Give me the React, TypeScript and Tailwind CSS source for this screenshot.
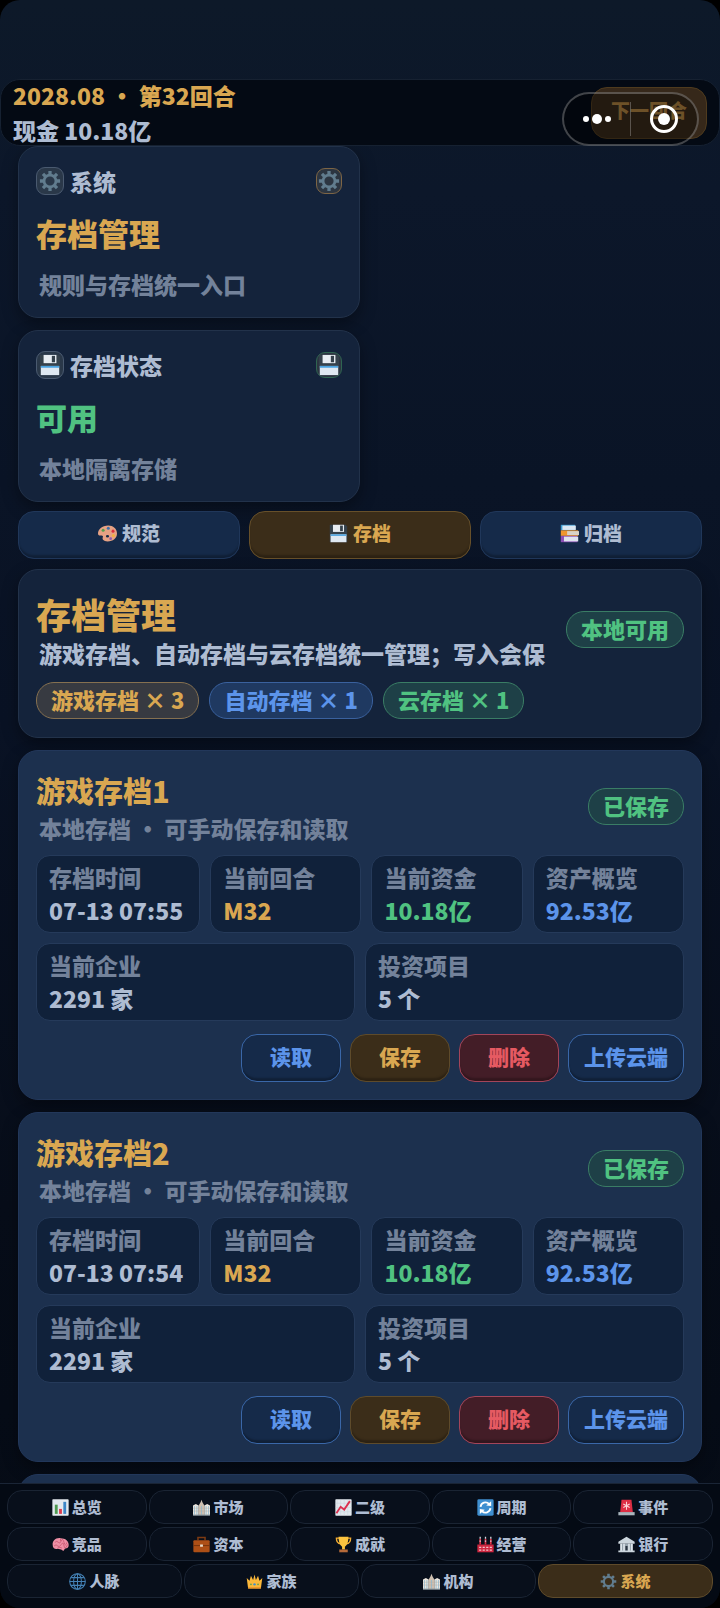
import type { ReactNode } from 'react';

type Tone = 'gold' | 'blue' | 'green' | 'plain';

const textTone: Record<Tone, string> = {
  gold: 'text-[#d9a751]',
  blue: 'text-[#5c94ea]',
  green: 'text-[#50c281]',
  plain: 'text-[#aebcd2]',
};

const chipTone: Record<Tone, string> = {
  gold: 'border-[#857050] bg-[#373a41] text-[#d9a751]',
  blue: 'border-[#3a619e] bg-[#1f3961] text-[#5c94ea]',
  green: 'border-[#3a7d65] bg-[#1e4047] text-[#50c281]',
  plain: 'border-[#3a4a63] bg-[#1d2c45] text-[#aebcd2]',
};

const drawings: Record<string, ReactNode> = {
  gear: (
    <g fill="none" stroke="#617c8e">
      <circle cx="12" cy="12" r="6.500" strokeWidth="3" />
      <path
        d="M12 5V1M12 23v-4M5 12H1M23 12h-4M7 7 4.300 4.300M19.700 19.700 17 17M7 17l-2.700 2.700M19.700 4.300 17 7"
        strokeWidth="3.600"
      />
    </g>
  ),
  floppy: (
    <>
      <path d="M1 1h20l2 2v20H1z" fill="#35414b" />
      <path d="M5 1h14v9H5z" fill="#e8edf2" />
      <path d="M14 2h3.500v7H14z" fill="#35414b" />
      <path d="M2 13h20v10H2z" fill="#dfe8f1" />
      <path d="M2 13h20v2H2z" fill="#4aa3e0" />
    </>
  ),
  palette: (
    <>
      <path
        d="M13 2C5 2 0 7 0 12c0 2 1.500 3 3.500 2.500S7 15 6 17s1 5 6 5c7 0 12-4 12-10S19 2 13 2zm-1 15a2 1.500 0 1 1 0-3 2 1.500 0 0 1 0 3z"
        fill="#e6a284"
      />
      <circle cx="6.500" cy="8" r="1.900" fill="#55a04c" />
      <circle cx="13" cy="5.500" r="1.900" fill="#3c6fa8" />
      <circle cx="19" cy="9" r="1.900" fill="#d92f3c" />
      <circle cx="19.500" cy="14.500" r="1.900" fill="#f2b13c" />
      <circle cx="16" cy="18.500" r="1.700" fill="#8a5bb0" />
    </>
  ),
  books: (
    <>
      <path d="M1 1h18v7H1z" fill="#3a9bd1" />
      <path d="M3 2h17v5.500H3z" fill="#dbe7f2" />
      <path d="M1 8h22v7H1z" fill="#f0962e" />
      <path d="M9 9h15v5H9z" fill="#d9d3c8" />
      <path d="M1 15h21v8H1z" fill="#8b4fb5" />
      <path d="M5 16h18v6H5z" fill="#dfe3ef" />
    </>
  ),
  city: (
    <>
      <path d="M8 9l2.500-4L12 1l1.500 4L16 9v14H8z" fill="#cdbfb0" />
      <path d="M0 9l4-2 4 2v14H0zM16 9l4-2 4 2v14h-8z" fill="#ebe6de" />
      <path d="M2 10v12M5.500 10v12M18.500 10v12M22 10v12M12 10v12" stroke="#8dbad2" strokeWidth="1.200" />
      <path d="M0 13h8M0 17h8M16 13h8M16 17h8M8 13h8M8 17h8" stroke="#b5aaa0" strokeWidth=".6" />
      <path d="M0 22h24v1.500H0z" fill="#83929c" />
    </>
  ),
  chart: (
    <>
      <rect x="0.500" y="0.500" width="23" height="23" rx="1" fill="#e3e9ee" />
      <path d="M4 8h4v13H4z" fill="#4f9a52" />
      <path d="M10 14h4v7h-4z" fill="#dc3b4e" />
      <path d="M16 4h4v17h-4z" fill="#3d86c6" />
    </>
  ),
  rise: (
    <>
      <rect x="0.500" y="0.500" width="23" height="23" rx="1" fill="#e3e9ee" />
      <path d="M3 1v22M8 1v22M13 1v22M18 1v22M1 6h22M1 12h22M1 18h22" stroke="#c6d3dd" strokeWidth=".7" />
      <path d="m2 20 6-9 5 4 8-12" fill="none" stroke="#dc3050" strokeWidth="2.600" />
    </>
  ),
  cycle: (
    <>
      <rect x="0.500" y="0.500" width="23" height="23" rx="2" fill="#3f8fd0" />
      <path d="M5 11a7 7 0 0 1 12-4M19 13a7 7 0 0 1-12 4" fill="none" stroke="#fff" strokeWidth="2.600" />
      <path d="m13 9 7 1V3zM11 15l-7-1v7z" fill="#fff" />
    </>
  ),
  siren: (
    <>
      <path d="M3 19 5 1h14l2 18z" fill="#dd2e44" />
      <path d="M12 4v11M7.500 7l9 5M16.500 7l-9 5" stroke="#fbd5da" strokeWidth="1.500" />
      <path d="M.5 18.500h23V23H.5z" fill="#a9b4bc" />
    </>
  ),
  brain: (
    <>
      <path
        d="M1 13C0 7 5 2 12 3c7 0 12 4 11.500 10 0 3-2 4.500-5 4.500L16 21l-3-2-5-1c-4 1-7-1-7-5z"
        fill="#ee8fa5"
      />
      <path
        d="M4 9q3-3 5 0t4-2 4 2 4 0M3 14q3-3 5 0t5-2 4 2 5-2M12 4v3M8 17q3-2 6 0"
        fill="none"
        stroke="#c95873"
        strokeWidth="1.200"
      />
    </>
  ),
  briefcase: (
    <>
      <path d="M7 6V2h10v4" fill="none" stroke="#7c3a12" strokeWidth="2.200" />
      <rect x="0.500" y="6" width="23" height="17" rx="1.500" fill="#ad4f16" />
      <path d="M.5 13.500h23" stroke="#6e300c" strokeWidth="1.200" />
      <path d="M10 12h4v3h-4z" fill="#e8dccb" />
    </>
  ),
  trophy: (
    <>
      <path d="M6 3H2q0 7 6 8M18 3h4q0 7-6 8" fill="none" stroke="#f2ac33" strokeWidth="2" />
      <path d="M5 1h14q0 11-5 14v4h-4v-4Q5 12 5 1z" fill="#fcc43f" />
      <path d="M6 19h12v4H6z" fill="#b56a3a" />
    </>
  ),
  factory: (
    <>
      <path d="M4.500 12V4M12 12V4M19.500 12V4" stroke="#dd2e44" strokeWidth="2.400" />
      <path d="M4.500 4V1M12 4V1M19.500 4V1M4.500 8V6.500M12 8V6.500M19.500 8V6.500" stroke="#d5dce2" strokeWidth="1.800" />
      <path d="M.5 12h23v11H.5z" fill="#cf2740" />
      <path d="M3 16h3M8 16h3M13 16h3M18 16h3M3 20h3M8 20h3M13 20h3M18 20h3" stroke="#f3c2ca" strokeWidth="1.600" />
    </>
  ),
  bank: (
    <>
      <path d="M12 1 .5 8v3h23V8z" fill="#ccd6dd" />
      <path d="M3 11h18v10H3z" fill="#96a4ae" />
      <path d="M4.500 11v10M8.500 11v10M15.500 11v10M19.500 11v10" stroke="#e1e8ed" strokeWidth="2.200" />
      <path d="M10.500 14h3v7h-3z" fill="#2a3440" />
      <path d="M.5 20.500h23V23H.5z" fill="#ccd6dd" />
    </>
  ),
  globe: (
    <g fill="none" stroke="#4380b4" strokeWidth="1.500">
      <circle cx="12" cy="12" r="11" />
      <ellipse cx="12" cy="12" rx="5.500" ry="11" />
      <path d="M12 1v22M1 12h22M3 6.500h18M3 17.500h18" />
    </g>
  ),
  crown: (
    <>
      <path d="M3 22 1 7l4 4 2-7 3 6 2-8 2 8 3-6 2 7 4-4-2 15z" fill="#fbb83a" />
      <circle cx="7" cy="16" r="1.200" fill="#55a04c" />
      <circle cx="12" cy="16" r="1.700" fill="#3f8fd0" />
      <circle cx="17" cy="16" r="1.200" fill="#55a04c" />
      <path d="M3 20h18v2H3z" fill="#e8912b" />
    </>
  ),
};

function Pic({ name, className }: { name: string; className: string }) {
  return (
    <svg viewBox="0 0 24 24" aria-hidden="true" className={`shrink-0 ${className}`}>
      {drawings[name]}
    </svg>
  );
}

function Chip({ tone, children }: { tone: Tone; children: ReactNode }) {
  return (
    <span
      className={`flex h-[37px] shrink-0 items-center rounded-[18px] border px-[14px] pb-[3px] text-[22px] leading-none font-black whitespace-pre ${chipTone[tone]}`}
    >
      {children}
    </span>
  );
}

function SummaryCard(props: { icon: string; label: string; value: string; note: string; tone: Tone; ring: string }) {
  return (
    <section className="w-1/2 rounded-[20px] border border-[#22324a] bg-[#14233b] px-[17px] pt-5 pb-4 shadow-[0_6px_16px_rgba(0,0,0,0.35)]">
      <div className="flex items-center gap-[6px]">
        <span className="flex size-7 items-center justify-center rounded-[9px] border border-[#4a5a70] bg-[#2a3849]">
          <Pic name={props.icon} className="size-[22px]" />
        </span>
        <h2 className={`text-[23px] leading-[28px] font-black ${textTone.plain}`}>{props.label}</h2>
        <span
          className={`ml-auto flex size-[26px] items-center justify-center rounded-[9px] border bg-[#2c3541] ${props.ring}`}
        >
          <Pic name={props.icon} className="size-[22px]" />
        </span>
      </div>
      <p className={`mt-4 text-[31px] leading-[44px] font-black ${textTone[props.tone]}`}>{props.value}</p>
      <p className="mt-3 pl-[3px] text-[23px] leading-[34px] font-black text-[#73829a]">{props.note}</p>
    </section>
  );
}

function Tab({ icon, label, active }: { icon: string; label: string; active?: boolean }) {
  return (
    <button
      type="button"
      className={`flex h-12 flex-1 items-center justify-center gap-[5px] rounded-[16px] border pb-[3px] text-[19px] font-black shadow-[inset_0_-4px_2px_-1px_rgba(0,0,0,0.25)] ${
        active ? 'border-[#67502a] bg-[#3b2d19] text-[#d9a751]' : 'border-[#20375a] bg-[#152a49] text-[#aebcd2]'
      }`}
    >
      <Pic name={icon} className="size-[19px]" />
      {label}
    </button>
  );
}

function Stat({ label, value, tone, className }: { label: string; value: string; tone: Tone; className: string }) {
  return (
    <div
      className={`flex min-h-[78px] flex-col justify-center rounded-[14px] border border-[#253a5a] bg-[#10213a] px-3 text-[23px] leading-[33px] font-black whitespace-nowrap ${className}`}
    >
      <dt className="text-[#73829a]">{label}</dt>
      <dd className={textTone[tone]}>{value}</dd>
    </div>
  );
}

const actionTone = {
  blue: 'border-[#3a67a8] bg-[#152a49] text-[#5c94ea]',
  gold: 'border-[#5e4b2b] bg-[#3b2d19] text-[#d9a751]',
  red: 'border-[#a3455a] bg-[#431d27] text-[#e65a62]',
};

function Action({ tone, children }: { tone: keyof typeof actionTone; children: ReactNode }) {
  return (
    <button
      type="button"
      className={`flex h-12 min-w-[100px] items-center justify-center rounded-[16px] border px-[15px] pb-[3px] text-[21px] font-black shadow-[inset_0_-4px_2px_-1px_rgba(0,0,0,0.25)] ${actionTone[tone]}`}
    >
      {children}
    </button>
  );
}

function SaveCard({ name, time }: { name: string; time: string }) {
  return (
    <article className="shrink-0 rounded-[20px] border border-[#22375a] bg-[#1c304e] p-[17px] shadow-[0_6px_16px_rgba(0,0,0,0.35)]">
      <header className="flex items-center justify-between">
        <div>
          <h2 className={`text-[29px] leading-[44px] font-black ${textTone.gold}`}>{name}</h2>
          <p className="pl-[3px] text-[23px] leading-[32px] font-black text-[#73829a]">本地存档 · 可手动保存和读取</p>
        </div>
        <Chip tone="green">已保存</Chip>
      </header>
      <dl className="mt-[11px] flex flex-wrap gap-[10px]">
        <Stat className="flex-[1_0_22%]" label="存档时间" value={time} tone="plain" />
        <Stat className="flex-[1_1_20%]" label="当前回合" value="M32" tone="gold" />
        <Stat className="flex-[1_1_20%]" label="当前资金" value="10.18亿" tone="green" />
        <Stat className="flex-[1_1_20%]" label="资产概览" value="92.53亿" tone="blue" />
        <Stat className="flex-[1_1_40%]" label="当前企业" value="2291 家" tone="plain" />
        <Stat className="flex-[1_1_40%]" label="投资项目" value="5 个" tone="plain" />
      </dl>
      <div className="mt-[13px] flex justify-end gap-[9px]">
        <Action tone="blue">读取</Action>
        <Action tone="gold">保存</Action>
        <Action tone="red">删除</Action>
        <Action tone="blue">上传云端</Action>
      </div>
    </article>
  );
}

const navRows: [string, string][][] = [
  [['chart', '总览'], ['city', '市场'], ['rise', '二级'], ['cycle', '周期'], ['siren', '事件']],
  [['brain', '竞品'], ['briefcase', '资本'], ['trophy', '成就'], ['factory', '经营'], ['bank', '银行']],
  [['globe', '人脉'], ['crown', '家族'], ['city', '机构'], ['gear', '系统']],
];

export default function App() {
  return (
    <div className="h-screen bg-black font-['Noto_Sans_CJK_SC',sans-serif]">
      <div className="flex h-full flex-col overflow-hidden rounded-[20px] bg-[linear-gradient(180deg,#0d1929_0%,#0c172a_12%,#0a1426_30%,#091224_45%,#070d19_75%,#050b15_100%)]">
        <header className="relative mt-[79px] flex h-[67px] shrink-0 items-center rounded-[20px] border border-[#162131] bg-[#040a14] px-3 font-black">
          <div className="text-[23px] leading-[35px]">
            <p className={`whitespace-pre ${textTone.gold}`}>2028.08 · 第32回合</p>
            <p className={textTone.plain}>现金 10.18亿</p>
          </div>
          <button
            type="button"
            className="ml-auto flex h-[52px] w-[116px] items-center justify-center rounded-[16px] border border-[#4f3b1e] bg-[#36281a] pb-1 text-[19px] text-[#a87d3e]"
          >
            下一回合
          </button>
          <div className="absolute top-3 right-[20px] flex h-[54px] w-[137px] items-center rounded-full border-2 border-white/25 bg-black/35">
            <button type="button" aria-label="更多" className="flex flex-1 items-center justify-center gap-[3px]">
              <span className="size-[6px] rounded-full bg-white" />
              <span className="size-[10px] rounded-full bg-white" />
              <span className="size-[6px] rounded-full bg-white" />
            </button>
            <span className="h-[34px] w-px bg-white/25" />
            <button type="button" aria-label="关闭" className="flex flex-1 items-center justify-center">
              <span className="flex size-7 items-center justify-center rounded-full border-[3px] border-white">
                <span className="size-3 rounded-full bg-white" />
              </span>
            </button>
          </div>
        </header>

        <main className="flex min-h-0 flex-1 flex-col gap-3 overflow-hidden px-[18px]">
          <SummaryCard icon="gear" label="系统" value="存档管理" note="规则与存档统一入口" tone="gold" ring="border-[#7d6545]" />
          <SummaryCard icon="floppy" label="存档状态" value="可用" note="本地隔离存储" tone="green" ring="border-[#2f6551]" />

          <div className="-mt-[3px] -mb-[2px] flex shrink-0 gap-[9px]">
            <Tab icon="palette" label="规范" />
            <Tab icon="floppy" label="存档" active />
            <Tab icon="books" label="归档" />
          </div>

          <section className="shrink-0 rounded-[20px] border border-[#22324a] bg-[#14233b] px-[17px] pt-5 pb-[18px] shadow-[0_6px_16px_rgba(0,0,0,0.35)]">
            <div className="flex items-center justify-between">
              <div>
                <h1 className={`text-[35px] leading-[47px] font-black ${textTone.gold}`}>存档管理</h1>
                <p className={`pl-[3px] text-[23px] leading-[32px] font-black ${textTone.plain}`}>
                  游戏存档、自动存档与云存档统一管理；写入会保
                </p>
              </div>
              <Chip tone="green">本地可用</Chip>
            </div>
            <div className="mt-[13px] flex gap-[10px]">
              <Chip tone="gold">游戏存档 × 3</Chip>
              <Chip tone="blue">自动存档 × 1</Chip>
              <Chip tone="green">云存档 × 1</Chip>
            </div>
          </section>

          <SaveCard name="游戏存档1" time="07-13 07:55" />
          <SaveCard name="游戏存档2" time="07-13 07:54" />
          <div className="h-12 shrink-0 rounded-[20px] border border-[#22375a] bg-[#1c304e]" />
        </main>

        <nav className="flex shrink-0 flex-col gap-[3px] rounded-b-[20px] border-t border-[#1a2536] bg-[#040a14] px-[7px] pt-[6px] pb-[10px]">
          {navRows.map((row, i) => (
            <div key={i} className="flex gap-[2px]">
              {row.map(([icon, label]) => (
                <a
                  key={label}
                  href="#"
                  className={`flex h-[34px] flex-1 items-center justify-center gap-[3px] rounded-[15px] border text-[15px] font-black ${
                    label === '系统' ? 'border-[#5e4b2b] bg-[#3b2d19] text-[#d9a751]' : 'border-[#1a2433] bg-[#080f1b] text-[#aebcd2]'
                  }`}
                >
                  <Pic name={icon} className="size-[17px]" />
                  {label}
                </a>
              ))}
            </div>
          ))}
        </nav>
      </div>
    </div>
  );
}
